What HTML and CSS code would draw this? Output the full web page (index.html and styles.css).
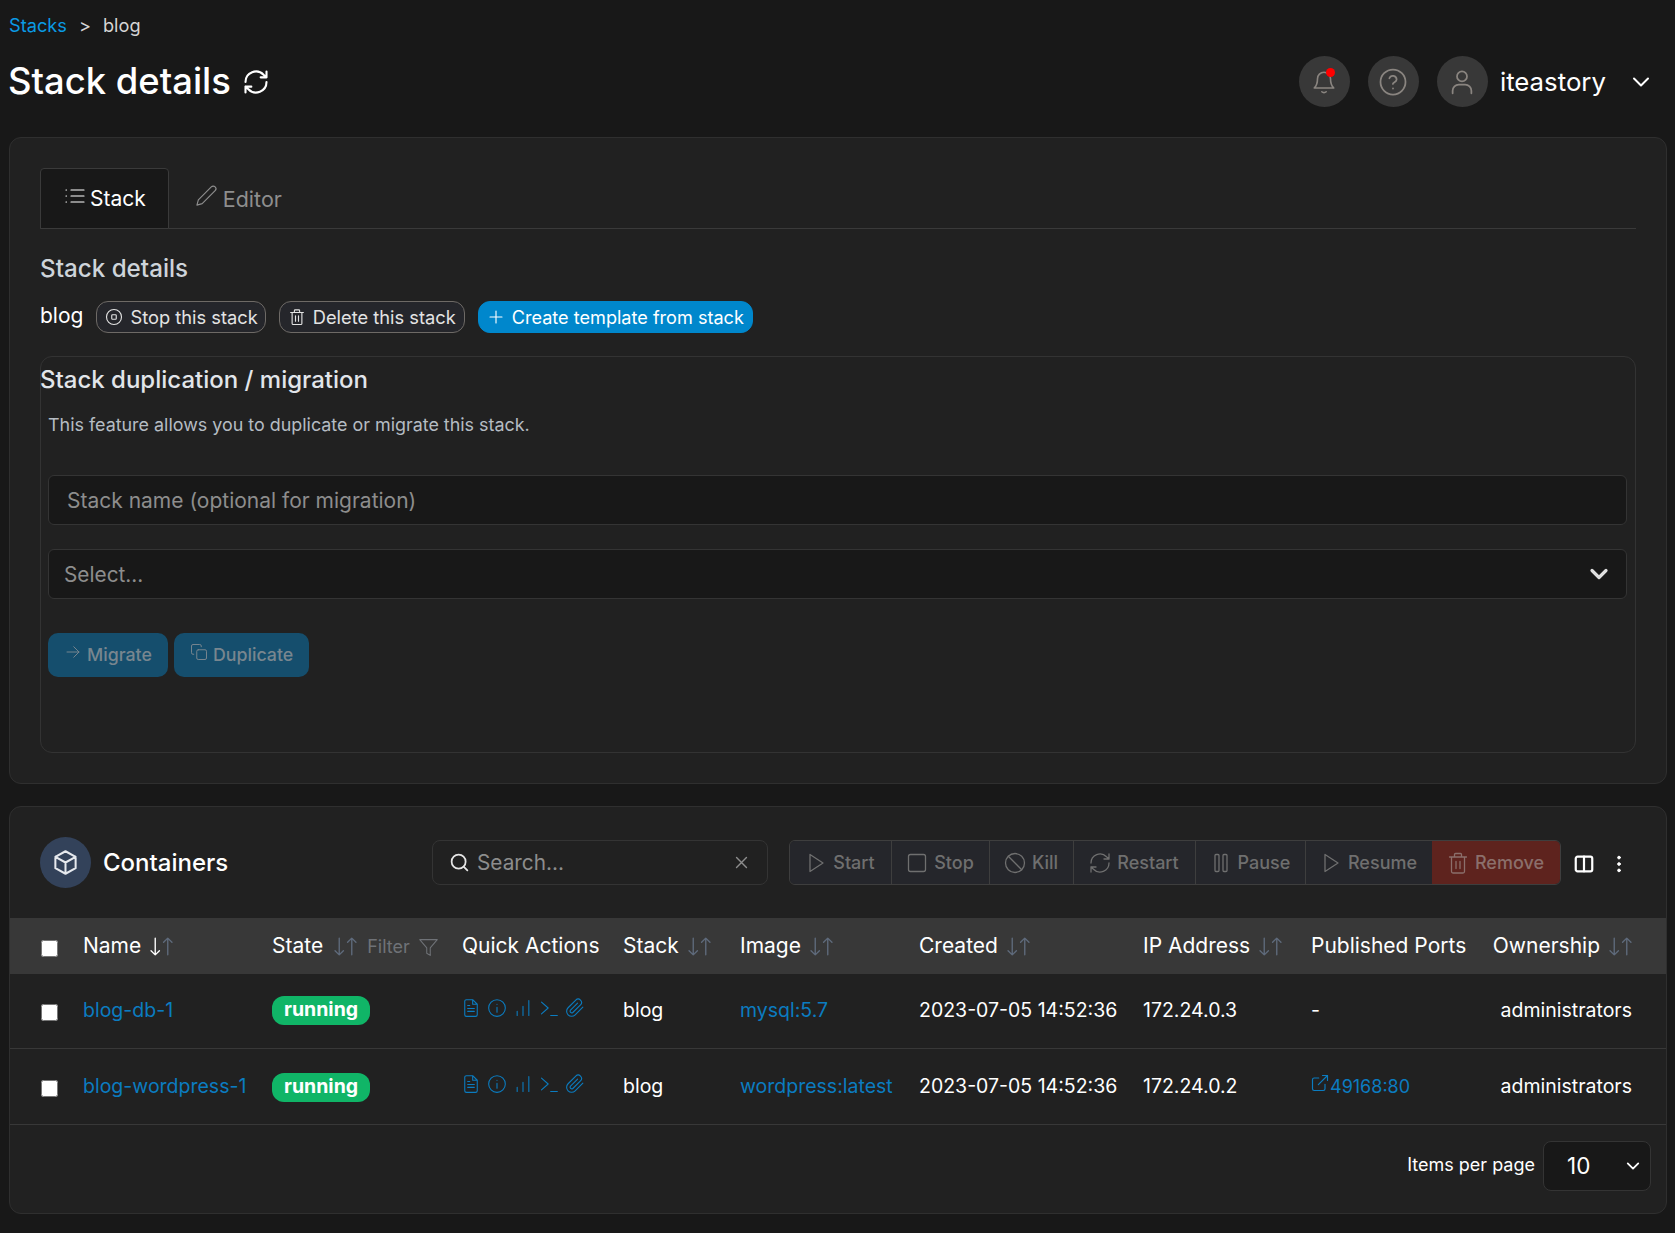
FILE: index.html
```html
<!DOCTYPE html>
<html lang="en">
<head>
<meta charset="utf-8">
<title>Stack details</title>
<link rel="stylesheet" href="styles.css">
</head>
<body>
<svg class="defs" width="0" height="0" aria-hidden="true">
  <symbol id="i-refresh" viewBox="0 0 24 24"><path d="M3 12a9 9 0 0 1 15.500-6.200L21 8M21 3v5h-5M21 12a9 9 0 0 1-15.500 6.200L3 16M3 21v-5h5"/></symbol>
  <symbol id="i-play" viewBox="0 0 24 24"><path d="M6 3.500l13 8.500-13 8.500z"/></symbol>
  <symbol id="i-square" viewBox="0 0 24 24"><rect x="3.500" y="3.500" width="17" height="17" rx="2"/></symbol>
  <symbol id="i-slash" viewBox="0 0 24 24"><circle cx="12" cy="12" r="9.500"/><path d="M5.300 5.300l13.400 13.400"/></symbol>
  <symbol id="i-pause" viewBox="0 0 24 24"><rect x="6" y="3.500" width="4" height="17" rx="1"/><rect x="14" y="3.500" width="4" height="17" rx="1"/></symbol>
  <symbol id="i-trash" viewBox="0 0 24 24"><path d="M3.500 6h17M8.500 6V3.500a1 1 0 0 1 1-1h5a1 1 0 0 1 1 1V6M5.500 6v14.500a1.500 1.500 0 0 0 1.500 1.500h10a1.500 1.500 0 0 0 1.500-1.500V6M10 10.500v7M14 10.500v7"/></symbol>
  <symbol id="i-sort" viewBox="0 0 22 18"><path class="sort-down" d="M5 1v16M1 13l4 4 4-4"/><path class="sort-up" d="M17 17V1M13 5l4-4 4 4"/></symbol>
  <symbol id="i-file" viewBox="0 0 24 24"><path d="M14 2H6.500A2 2 0 0 0 4.500 4v16a2 2 0 0 0 2 2h11a2 2 0 0 0 2-2V7.500zM14 2v5.500h5.500M8 12.500h8M8 16h8M8 9h2.500"/></symbol>
  <symbol id="i-info" viewBox="0 0 24 24"><circle cx="12" cy="12" r="10"/><path d="M12 11v6M12 7.400v.2"/></symbol>
  <symbol id="i-bars" viewBox="0 0 24 24"><path d="M5 21v-5M12 21V10M19 21V3"/></symbol>
  <symbol id="i-term" viewBox="0 0 24 24"><path d="M3 5l8 7-8 7M14 21h8"/></symbol>
  <symbol id="i-clip" viewBox="0 0 24 24"><path d="M21.400 11l-9.200 9.200a6 6 0 0 1-8.500-8.500l9.200-9.200a4 4 0 0 1 5.700 5.700l-9.200 9.200a2 2 0 0 1-2.800-2.800l8.500-8.500"/></symbol>
  <symbol id="i-chev" viewBox="0 0 24 24"><path d="M5 8.500l7 7 7-7"/></symbol>
</svg>

<main class="page">
  <nav class="crumbs"><a class="link" href="#">Stacks</a><span class="crumb-sep">&gt;</span><span>blog</span></nav>

  <header class="topbar">
    <div class="title-wrap">
      <h1 class="title">Stack details</h1>
      <svg class="icon title-icon"><use href="#i-refresh"/></svg>
    </div>
    <div class="user">
      <span class="round has-dot">
        <svg class="icon" viewBox="0 0 24 24"><path d="M6 9a6 6 0 0 1 12 0c0 6 2.500 8 3 8.500H3c.5-.5 3-2.500 3-8.500M10 21c1 1 3 1 4 0"/></svg>
        <span class="dot"></span>
      </span>
      <span class="round">
        <svg class="icon icon-lg" viewBox="0 0 24 24"><circle cx="12" cy="12" r="10"/><path d="M9.100 9a3 3 0 0 1 5.800 1c0 2-3 2.600-3 3.500M12 17v.2"/></svg>
      </span>
      <span class="round">
        <svg class="icon icon-lg" viewBox="0 0 24 24"><circle cx="12" cy="7.500" r="4"/><path d="M4.500 21v-2a5 5 0 0 1 5-5h5a5 5 0 0 1 5 5v2"/></svg>
      </span>
      <span class="username">iteastory</span>
      <svg class="icon user-chev"><use href="#i-chev"/></svg>
    </div>
  </header>

  <section class="panel panel-stack">
    <div class="tabs">
      <a class="tab tab-active" href="#">
        <svg class="icon tab-icon" viewBox="0 0 24 24"><path d="M8 6h13M8 12h13M8 18h13M3 6h.5M3 12h.5M3 18h.5"/></svg>Stack
      </a>
      <a class="tab" href="#">
        <svg class="icon tab-icon pen" viewBox="0 0 24 24"><path d="M17 3a2.800 2.800 0 0 1 4 4L7.500 20.500 2 22l1.500-5.500z"/></svg>Editor
      </a>
    </div>

    <h2 class="section-title">Stack details</h2>
    <div class="stack-row">
      <span class="stack-name">blog</span>
      <button class="pill pill-stop">
        <svg class="icon pill-icon" viewBox="0 0 24 24"><circle cx="12" cy="12" r="10"/><rect x="9" y="9" width="6" height="6" rx="1"/></svg>Stop this stack
      </button>
      <button class="pill">
        <svg class="icon pill-icon"><use href="#i-trash"/></svg>Delete this stack
      </button>
      <button class="pill pill-primary">
        <svg class="icon pill-icon" viewBox="0 0 24 24"><path d="M12 4v16M4 12h16"/></svg>Create template from stack
      </button>
    </div>

    <div class="dup-box">
      <h3 class="dup-title">Stack duplication / migration</h3>
      <div class="dup-body">
        <p class="dup-text">This feature allows you to duplicate or migrate this stack.</p>
        <input class="field field-input" type="text" placeholder="Stack name (optional for migration)">
        <div class="field field-select">
          <span>Select...</span>
          <svg class="icon select-chev"><use href="#i-chev"/></svg>
        </div>
        <div class="dup-actions">
          <button class="muted-btn">
            <svg class="icon muted-icon" viewBox="0 0 24 24"><path d="M4 12h16M13 5l7 7-7 7"/></svg>Migrate
          </button>
          <button class="muted-btn">
            <svg class="icon muted-icon" viewBox="0 0 24 24"><rect x="9" y="9" width="13" height="13" rx="2"/><path d="M5 15H4a2 2 0 0 1-2-2V4a2 2 0 0 1 2-2h9a2 2 0 0 1 2 2v1"/></svg>Duplicate
          </button>
        </div>
      </div>
    </div>
  </section>

  <section class="panel panel-containers">
    <div class="toolbar">
      <div class="box-title">
        <span class="box-icon">
          <svg class="icon" viewBox="0 0 24 24"><path d="M12 2l9 5v10l-9 5-9-5V7zM3 7l9 5 9-5M12 12v10"/></svg>
        </span>
        <h2 class="containers-title">Containers</h2>
      </div>
      <div class="search">
        <svg class="icon search-icon" viewBox="0 0 24 24"><circle cx="11" cy="11" r="8"/><path d="M21 21l-4.300-4.300"/></svg>
        <span class="search-text">Search...</span>
        <svg class="icon search-x" viewBox="0 0 24 24"><path d="M5 5l14 14M19 5L5 19"/></svg>
      </div>
      <div class="actions">
        <button class="act act-start"><svg class="icon"><use href="#i-play"/></svg>Start</button>
        <button class="act act-stop"><svg class="icon"><use href="#i-square"/></svg>Stop</button>
        <button class="act act-kill"><svg class="icon"><use href="#i-slash"/></svg>Kill</button>
        <button class="act act-restart"><svg class="icon"><use href="#i-refresh"/></svg>Restart</button>
        <button class="act act-pause"><svg class="icon"><use href="#i-pause"/></svg>Pause</button>
        <button class="act act-resume"><svg class="icon"><use href="#i-play"/></svg>Resume</button>
        <button class="act act-remove"><svg class="icon"><use href="#i-trash"/></svg>Remove</button>
      </div>
      <svg class="icon cols-icon" viewBox="0 0 24 24"><rect x="3" y="4" width="18" height="16" rx="2"/><path d="M12 4v16"/></svg>
      <svg class="icon more-icon" viewBox="0 0 24 24"><circle cx="12" cy="5" r="1.500"/><circle cx="12" cy="12" r="1.500"/><circle cx="12" cy="19" r="1.500"/></svg>
    </div>

    <table class="grid">
      <colgroup>
        <col class="c-check"><col class="c-name"><col class="c-state"><col class="c-quick"><col class="c-stack"><col class="c-image"><col class="c-created"><col class="c-ip"><col class="c-ports"><col class="c-owner">
      </colgroup>
      <thead>
        <tr>
          <th class="cell-check"><input type="checkbox" class="check check-head"></th>
          <th>Name<svg class="icon sort sort-active"><use href="#i-sort"/></svg></th>
          <th>State<svg class="icon sort sort-state"><use href="#i-sort"/></svg><span class="filter">Filter<svg class="icon filter-icon" viewBox="0 0 24 24"><path d="M2 3h20l-8 9.500V21l-4-2.500v-6z"/></svg></span></th>
          <th>Quick Actions</th>
          <th>Stack<svg class="icon sort"><use href="#i-sort"/></svg></th>
          <th>Image<svg class="icon sort"><use href="#i-sort"/></svg></th>
          <th>Created<svg class="icon sort"><use href="#i-sort"/></svg></th>
          <th>IP Address<svg class="icon sort"><use href="#i-sort"/></svg></th>
          <th>Published Ports</th>
          <th class="cell-owner">Ownership<svg class="icon sort"><use href="#i-sort"/></svg></th>
        </tr>
      </thead>
      <tbody>
        <tr class="row-first">
          <td class="cell-check"><input type="checkbox" class="check"></td>
          <td><a class="link-dark" href="#">blog-db-1</a></td>
          <td><span class="badge">running</span></td>
          <td><div class="quick">
            <svg class="icon"><use href="#i-file"/></svg><svg class="icon"><use href="#i-info"/></svg><svg class="icon"><use href="#i-bars"/></svg><svg class="icon"><use href="#i-term"/></svg><svg class="icon"><use href="#i-clip"/></svg>
          </div></td>
          <td>blog</td>
          <td><a class="link-dark" href="#">mysql:5.7</a></td>
          <td>2023-07-05 14:52:36</td>
          <td>172.24.0.3</td>
          <td>-</td>
          <td class="cell-owner">administrators</td>
        </tr>
        <tr class="row-second">
          <td class="cell-check"><input type="checkbox" class="check"></td>
          <td><a class="link-dark" href="#">blog-wordpress-1</a></td>
          <td><span class="badge">running</span></td>
          <td><div class="quick">
            <svg class="icon"><use href="#i-file"/></svg><svg class="icon"><use href="#i-info"/></svg><svg class="icon"><use href="#i-bars"/></svg><svg class="icon"><use href="#i-term"/></svg><svg class="icon"><use href="#i-clip"/></svg>
          </div></td>
          <td>blog</td>
          <td><a class="link-dark" href="#">wordpress:latest</a></td>
          <td>2023-07-05 14:52:36</td>
          <td>172.24.0.2</td>
          <td><a class="link-dark port" href="#"><svg class="icon port-icon" viewBox="0 0 24 24"><path d="M18 13.500V19a2 2 0 0 1-2 2H5a2 2 0 0 1-2-2V8a2 2 0 0 1 2-2h5.500M15 3h6v6M10 14L21 3"/></svg>49168:80</a></td>
          <td class="cell-owner">administrators</td>
        </tr>
      </tbody>
    </table>

    <div class="table-foot">
      <span class="per-page">Items per page</span>
      <div class="page-select"><span>10</span><svg class="icon page-chev"><use href="#i-chev"/></svg></div>
    </div>
  </section>
</main>
</body>
</html>
```
FILE: styles.css
```css
* { box-sizing: border-box; }

html, body { margin: 0; background: #181818; }

body {
  font-family: Inter, "Liberation Sans", sans-serif;
  color: #fff;
  font-size: 20px;
}

.defs { position: absolute; }

.icon {
  fill: none;
  stroke: currentColor;
  stroke-width: 2;
  stroke-linecap: round;
  stroke-linejoin: round;
  flex: none;
}

.page { padding: 15px 8px 20px 9px; }

.link { color: #0a9be5; text-decoration: none; }
.link-dark { color: #0b7cc0; text-decoration: none; }

.crumbs {
  display: flex;
  font-size: 18.200px;
  line-height: 20px;
  color: #d5d5d5;
}
.crumb-sep { margin: 0 12px; }

.topbar {
  display: flex;
  align-items: center;
  justify-content: space-between;
  margin-top: 21px;
  height: 51px;
}
.title-wrap { display: flex; align-items: center; margin-left: -1px; }
.title { margin: 0; font-size: 36.400px; font-weight: 500; line-height: 51px; }
.title-icon { width: 28px; height: 28px; margin-left: 11px; stroke-width: 1.8; }

.user { display: flex; align-items: center; color: #8a8580; padding-right: 14px; }
.round {
  position: relative;
  width: 51px;
  height: 51px;
  margin-left: 18px;
  border-radius: 50%;
  background: #383838;
  display: flex;
  align-items: center;
  justify-content: center;
}
.round .icon { width: 26px; height: 26px; stroke-width: 1.5; }
.round .icon-lg { width: 30px; height: 30px; stroke-width: 1.4; }
.dot {
  position: absolute;
  top: 12px;
  left: 27px;
  width: 9px;
  height: 9px;
  border-radius: 50%;
  background: #f00;
}
.username { color: #fff; font-size: 25.800px; margin-left: 12px; }
.user-chev { color: #fff; width: 24px; height: 24px; margin-left: 23px; }

.panel {
  background: #212121;
  border: 1px solid #2f2f2f;
  border-radius: 12px;
}
.panel-stack {
  margin-top: 30px;
  height: 647px;
  padding: 30px 30px 0;
}
.panel-containers { margin-top: 22px; height: 408px; }

.tabs {
  display: flex;
  height: 61px;
  border-bottom: 1px solid #3a3a3a;
}
.tab {
  display: flex;
  align-items: center;
  padding: 0 22px;
  margin-right: 1px;
  color: #8e8e8e;
  text-decoration: none;
  font-size: 21px;
  height: 61px;
  border: 1px solid transparent;
  border-radius: 4px 4px 0 0;
}
.tab-active { background: #181818; border-color: #3a3a3a; color: #fff; }
.tab-icon { width: 24px; height: 24px; margin: -6px 3px 0 0; stroke-width: 1.2; }
.pen { width: 23px; height: 23px; margin: -6px 5px 0 2px; }
.tab:last-child { font-size: 21.500px; }

.section-title {
  margin: 22px 0 0;
  font-size: 24.200px;
  line-height: 36px;
  font-weight: 500;
  color: #ced4da;
}

.stack-row {
  display: flex;
  align-items: center;
  margin-top: 14px;
  height: 32px;
}
.stack-name { font-size: 21px; margin-right: 13px; margin-top: -3px; }

.pill {
  display: inline-flex;
  align-items: center;
  height: 32px;
  padding: 0 8px;
  margin-right: 13px;
  border-radius: 12px;
  border: 1px solid #6e6a66;
  background: #25262b;
  color: #e3e3e3;
  font: 18.300px Inter, sans-serif;
}
.pill-stop { padding-right: 7px; }
.pill-icon { width: 18px; height: 18px; margin-right: 7px; stroke-width: 1.5; }
.pill-primary { background: #0087cc; border-color: #0087cc; color: #fff; font-size: 18.100px; }

.dup-box {
  margin-top: 23px;
  height: 397px;
  border: 1px solid #333;
  border-radius: 12px;
}
.dup-title {
  margin: 5px 0 0 -1px;
  font-size: 24px;
  line-height: 36px;
  font-weight: 500;
  color: #e1e5ea;
}
.dup-body { padding: 0 8px 0 7px; }
.dup-text {
  margin: 13px 0 0;
  font-size: 17.900px;
  line-height: 28px;
  color: #b5bcc3;
}
.field {
  display: block;
  width: 100%;
  height: 50px;
  background: #181818;
  border: 1px solid #343434;
  border-radius: 6px;
  color: #8d8d8d;
  font: 21px Inter, sans-serif;
}
.field-input { margin-top: 36px; padding: 0 18px; outline: none; }
.field-input::placeholder { color: #8d8d8d; opacity: 1; }
.field-select {
  margin-top: 24px;
  font-size: 20.800px;
  padding: 0 15px 0 15px;
  display: flex;
  align-items: center;
  justify-content: space-between;
}
.select-chev { width: 24px; height: 24px; color: #e0e0e0; stroke-width: 3.200; }

.dup-actions { display: flex; margin-top: 34px; gap: 6px; }
.muted-btn {
  display: inline-flex;
  align-items: center;
  height: 44px;
  padding: 0 16px 2px;
  border: 0;
  border-radius: 10px;
  background: #154e6d;
  color: #78868f;
  font: 500 17.800px Inter, sans-serif;
}
.muted-icon { width: 18px; height: 18px; margin: -5px 5px 0 0; stroke-width: 1.3; }

.toolbar {
  display: flex;
  align-items: center;
  height: 111px;
  padding-left: 30px;
}
.box-title { flex: 0 0 392px; display: flex; align-items: center; }
.box-icon {
  width: 51px;
  height: 51px;
  border-radius: 50%;
  background: #33425a;
  display: flex;
  align-items: center;
  justify-content: center;
}
.box-icon .icon { width: 27px; height: 27px; stroke-width: 1.8; color: #e6e9ee; }
.containers-title { margin: 0 0 0 12px; font-size: 24px; font-weight: 500; }

.search {
  flex: 0 0 336px;
  height: 45px;
  display: flex;
  align-items: center;
  padding: 0 16px;
  background: #212121;
  border: 1px solid #343434;
  border-radius: 8px;
  color: #8d8d8d;
  font-size: 20.800px;
}
.search-icon { width: 21px; height: 21px; color: #e6e6e6; }
.search-text { flex: 1; margin-left: 7px; }
.search-x { width: 17px; height: 17px; color: #8d8d8d; margin-right: 1px; }

.actions {
  display: flex;
  height: 45px;
  margin-left: 21px;
  border: 1px solid #3e3e3e;
  border-radius: 6px;
  overflow: hidden;
}
.act {
  display: inline-flex;
  align-items: center;
  justify-content: center;
  gap: 5px;
  padding: 0 2px 0 0;
  border: 0;
  border-left: 1px solid #3e3e3e;
  background: #25262b;
  color: #6f6f6f;
  font: 500 18px Inter, sans-serif;
}
.act:first-child { border-left: 0; }
.act .icon { width: 24px; height: 24px; stroke-width: 1.3; }
.act-start { width: 101px; }
.act-stop { width: 98px; }
.act-kill { width: 84px; }
.act-restart { width: 122px; }
.act-pause { width: 110px; }
.act-resume { width: 127px; }
.act-remove { width: 128px; background: #5e231e; color: #8b6f6b; border-left: 0; }

.cols-icon { width: 22px; height: 22px; margin: 3px 0 0 12px; stroke-width: 2.4; }
.more-icon { width: 22px; height: 22px; margin: 3px 0 0 13px; fill: #fff; stroke-width: 1; }

.grid {
  width: 100%;
  table-layout: fixed;
  border-collapse: collapse;
  font-size: 19.500px;
}
.c-check { width: 73px; }
.c-name { width: 189px; }
.c-state { width: 190px; }
.c-quick { width: 161px; }
.c-stack { width: 117px; }
.c-image { width: 179px; }
.c-created { width: 224px; }
.c-ip { width: 168px; }
.c-ports { width: 180px; }

.grid th {
  height: 56px;
  padding: 0 0 2px;
  background: #383838;
  text-align: left;
  font-size: 21px;
  font-weight: 400;
  white-space: nowrap;
}
.grid td {
  padding: 0 0 2px;
  border-bottom: 1px solid #383838;
  white-space: nowrap;
}
.row-first td { height: 74px; }
.row-second td { height: 76px; padding-bottom: 0; }
.cell-check { padding-left: 31px !important; }
.check { display: block; width: 17px; height: 17px; margin: 5px 0 0; }
.check-head { margin-top: 6px; }
.cell-owner { text-align: right !important; padding-right: 34px !important; }

.sort {
  width: 23px;
  height: 19px;
  margin-left: 9px;
  vertical-align: -3px;
  color: #5f6b7c;
  stroke-width: 1.3;
}
.sort-state { margin-left: 11px; }
.sort-down { stroke: currentColor; }
.sort-up { stroke: #5f6b7c; }
.sort-active { color: #fff; }
.filter { margin-left: 10px; color: #6f7277; font-size: 18px; font-weight: 400; }
.filter-icon { width: 21px; height: 21px; margin-left: 8px; vertical-align: -5px; stroke-width: 1.2; }

.badge {
  display: inline-block;
  margin-top: 2px;
  padding: 0 12px;
  height: 29px;
  line-height: 27px;
  border-radius: 12px;
  background: #10b567;
  font-weight: 700;
}

.quick { display: flex; gap: 6px; color: #0b7cc0; margin: -4px 0 0 -1px; }
.quick .icon { width: 20px; height: 20px; stroke-width: 1.3; }

.port { display: inline-flex; align-items: center; font-size: 18px; }
.port-icon { width: 20px; height: 20px; margin: -6px 0 0 -1px; stroke-width: 1.4; }

.table-foot {
  display: flex;
  align-items: center;
  justify-content: flex-end;
  height: 88px;
  padding: 0 15px 6px 0;
}
.per-page { font-size: 18px; margin: -2px 8px 0 0; }
.page-select {
  display: flex;
  align-items: center;
  justify-content: space-between;
  width: 108px;
  height: 50px;
  padding: 0 8px 0 23px;
  background: #181818;
  border: 1px solid #343434;
  border-radius: 8px;
  font-size: 22.500px;
}
.page-chev { width: 18px; height: 18px; stroke-width: 2.4; }
```
